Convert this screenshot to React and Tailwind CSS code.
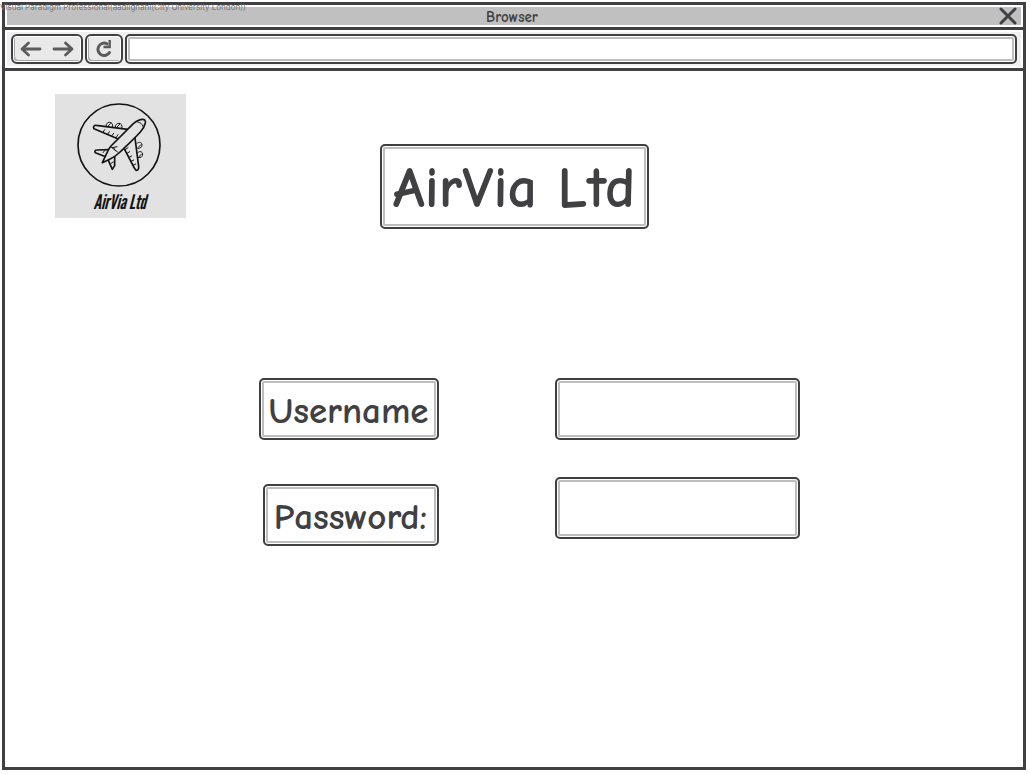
const frame =
  "rounded-[5px] border-2 border-[#404042] bg-white text-[#404042] shadow-[inset_0_0_0_1px_#fff,inset_0_0_0_3px_#bebebe]";
const comic = "font-['Comic_Sans_MS','Comic_Neue',Lato,sans-serif] font-bold";
const toolButton =
  "flex h-[30px] items-center rounded-[6px] border-2 border-[#404042] bg-[#e9e9e9] shadow-[inset_0_0_0_1px_#fff,inset_2px_-2px_0_0_#aaa]";

function ArrowIcon({ flip }) {
  return (
    <svg
      viewBox="0 0 22 16"
      className={flip ? "h-4 w-[22px] rotate-180" : "h-4 w-[22px]"}
      fill="none"
      stroke="#5c5c5c"
      strokeWidth="2.8"
      strokeLinecap="round"
      strokeLinejoin="round"
      aria-hidden="true"
    >
      <path d="M20 8H3M8.500 2 2 8l6.500 6" />
    </svg>
  );
}

function ReloadIcon() {
  return (
    <svg viewBox="0 0 18 18" className="size-[18px]" fill="none" stroke="#5c5c5c" aria-hidden="true">
      <path d="M14.500 12.500A6.200 6.200 0 1 1 12 3.800" strokeWidth="3" strokeLinecap="round" />
      <path d="M14.700 0v7H8.500" strokeWidth="2.400" />
    </svg>
  );
}

function PlaneIcon() {
  return (
    <svg
      viewBox="0 0 270 270"
      className="size-[90px]"
      fill="none"
      stroke="#141414"
      strokeWidth="5"
      strokeLinejoin="round"
      strokeLinecap="round"
      aria-hidden="true"
    >
      <circle cx="132" cy="135" r="123" />
      <g strokeWidth="3">
        <path d="M93 79c-1-8 5-12 11-12s10 5 9 14M98 79l8-8M121 82c-1-8 5-12 11-12s10 5 9 14M126 81l8-8" />
        <path d="M186 130c7-6 14-3 15 4s-5 12-13 11M190 142l8-8M188 158c7-6 14-3 15 4s-5 12-13 11M192 170l8-8" />
      </g>
      <path d="M164 89 64 76c-6-1-11 5-7 10l78 33" />
      <path d="M179 106l12 94c1 7-3 12-8 11l-5-7-32-61" />
      <path d="M102 149l-36 1c-6 0-8 5-5 8l31 12" />
      <path d="M119 169v28l-7 11-13-29" />
      <path d="M82 188l17-36c2-5 5-9 9-14l67-67c8-7 18-13 28-13 7 0 9 5 8 11-2 10-8 19-15 27-21 23-43 43-64 63-9 8-18 14-28 19z" fill="#e2e2e2" />
      <g strokeWidth="3">
        <path d="M188 66c8 1 14 6 16 13M107 140l22 17M112 143l14-3M120 151l-4-8" />
        <path d="M84 97l5-8M98 103l5-8M110 108l6-8M123 113l6-9M156 160l8-5M162 172l8-4M168 184l8-4M174 196l8-4M150 149l9-6" />
        <path d="M84 158l5-6M108 190l7-4" />
      </g>
    </svg>
  );
}

function TitleBar() {
  return (
    <header className="border-b-[3px] border-[#404042] p-[2px]">
      <div className="grid h-[18px] grid-cols-[1fr_auto_1fr] items-center bg-[#c0c0c0] pr-[4px]">
        <h2 className={`${comic} col-start-2 pt-[2px] text-[15px] leading-[16px] text-[#404042]`}>
          Browser
        </h2>
        <button type="button" aria-label="Close" className="justify-self-end">
          <svg viewBox="0 0 18 18" className="size-[18px]" stroke="#404042" strokeWidth="3" strokeLinecap="round" aria-hidden="true">
            <path d="M2 2l14 14M16 2 2 16" />
          </svg>
        </button>
      </div>
    </header>
  );
}

function Toolbar() {
  return (
    <nav aria-label="Navigation" className="border-b-[3px] border-[#404042] p-[2px]">
      <div className="flex gap-[2px] bg-[#f0f0f0] py-[2px] pr-[4px] pl-[4px]">
        <div className={`${toolButton} w-[72px] justify-between px-[7px]`}>
          <button type="button" aria-label="Back">
            <ArrowIcon />
          </button>
          <button type="button" aria-label="Forward">
            <ArrowIcon flip />
          </button>
        </div>
        <button type="button" aria-label="Reload" className={`${toolButton} w-[38px] justify-center`}>
          <ReloadIcon />
        </button>
        <input type="text" aria-label="Address" className={`${frame} h-[30px] min-w-0 flex-1 px-2 text-sm outline-none`} />
      </div>
    </nav>
  );
}

function Logo() {
  return (
    <div className="flex h-[124px] w-[131px] flex-col items-center justify-self-start bg-[#e2e2e2] pt-[6px] pr-[2px]">
      <PlaneIcon />
      <p className="font-['League_Gothic','Bebas_Neue','Antonio','Oswald','Roboto_Condensed','Liberation_Sans_Narrow','Liberation_Sans',sans-serif] text-[20px] leading-[24px] whitespace-nowrap text-[#141414] italic">
        AirVia Ltd
      </p>
    </div>
  );
}

export default function App() {
  return (
    <div className="min-h-screen bg-white pt-[2px] pr-[4px] pb-[4px] pl-[2px]">
      <p className="pointer-events-none absolute top-[2px] left-0 font-['Inter','DejaVu_Sans',sans-serif] text-[8px] leading-[10px] whitespace-nowrap text-[#777]">
        Visual Paradigm Professional(aadilghani(City University London))
      </p>
      <div className="min-h-[calc(100vh-6px)] border-[3px] border-[#404042]">
        <TitleBar />
        <Toolbar />
        <main>
          <div className="grid grid-cols-[1fr_auto_1fr] items-start px-[50px] pt-[23px]">
            <Logo />
            <h1 className={`${frame} ${comic} mt-[50px] flex h-[85px] w-[269px] items-center justify-center pt-[4px] text-[58px] leading-none`}>
              AirVia Ltd
            </h1>
          </div>
          <form className="mt-[149px] flex justify-center gap-[116px] pl-[30px]">
            <div className="flex flex-col items-end gap-[44px]">
              <label htmlFor="username" className={`${frame} ${comic} flex h-[62px] w-[180px] items-center justify-center pt-[4px] text-[37px] leading-none`}>
                Username
              </label>
              <label htmlFor="password" className={`${frame} ${comic} flex h-[62px] w-[176px] items-center justify-center pt-[4px] text-[37px] leading-none`}>
                Password:
              </label>
            </div>
            <div className="flex flex-col gap-[37px]">
              <input id="username" type="text" className={`${frame} h-[62px] w-[245px] px-3 text-2xl outline-none`} />
              <input id="password" type="password" className={`${frame} h-[62px] w-[245px] px-3 text-2xl outline-none`} />
            </div>
          </form>
        </main>
      </div>
    </div>
  );
}
